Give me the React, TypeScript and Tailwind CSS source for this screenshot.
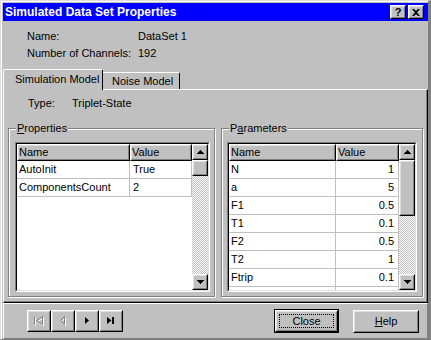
import React from "react";

function Raised({
  className = "",
  inner = "",
  children,
}: {
  className?: string;
  inner?: string;
  children?: React.ReactNode;
}) {
  return (
    <div
      className={`border border-t-white border-l-white border-r-black border-b-black bg-[#c0c0c0] ${className}`}
    >
      <div
        className={`w-full h-full border border-t-[#dfdfdf] border-l-[#dfdfdf] border-r-[#808080] border-b-[#808080] ${inner}`}
      >
        {children}
      </div>
    </div>
  );
}

function UpArrow() {
  return (
    <svg width="7" height="4" viewBox="0 0 7 4">
      <path d="M3 0h1v1h1v1h1v1h1v1H0V3h1V2h1V1h1z" fill="#000" />
    </svg>
  );
}
function DownArrow() {
  return (
    <svg width="7" height="4" viewBox="0 0 7 4">
      <path d="M0 0h7v1H6v1H5v1H4v1H3V3H2V2H1V1H0z" fill="#000" />
    </svg>
  );
}

function ListView({
  width,
  col1,
  col2,
  rows,
  rightAlign,
  thumb,
  extraRow,
}: {
  width: string;
  col1: string;
  col2: string;
  rows: [string, string][];
  rightAlign?: boolean;
  thumb: string;
  extraRow?: boolean;
}) {
  return (
    <div
      className={`${width} h-[150px] border border-t-[#808080] border-l-[#808080] border-r-white border-b-white`}
    >
      <div className="w-full h-full border border-t-black border-l-black border-r-[#dfdfdf] border-b-[#dfdfdf] bg-white flex">
        <div className="flex-1 flex flex-col overflow-hidden">
          <div className="flex h-[17px] shrink-0">
            <Raised className={`${col1} h-[17px]`} inner="leading-[13px]">
              Name
            </Raised>
            <Raised className={`${col2} h-[17px]`} inner="leading-[13px]">
              Value
            </Raised>
          </div>
          {rows.map(([n, v]) => (
            <div key={n} className="flex h-[18px] shrink-0 border-b border-[#c0c0c0]">
              <div className={`${col1} pl-[2px] border-r border-[#c0c0c0] leading-[17px]`}>{n}</div>
              <div
                className={`${col2} leading-[17px] border-r border-[#c0c0c0] ${
                  rightAlign ? "text-right pr-[4px]" : "pl-[3px]"
                }`}
              >
                {v}
              </div>
            </div>
          ))}
          {extraRow && (
            <div className="flex h-[18px] shrink-0">
              <div className={`${col1} border-r border-[#c0c0c0]`}></div>
              <div className={`${col2} border-r border-[#c0c0c0]`}></div>
            </div>
          )}
        </div>
        <div className="w-[16px] flex flex-col shrink-0">
          <Raised className="w-[16px] h-[16px]" inner="flex items-center justify-center">
            <UpArrow />
          </Raised>
          <Raised className={`w-[16px] ${thumb}`} />
          <div className="flex-1 bg-[repeating-conic-gradient(#c0c0c0_0%_25%,#ffffff_0%_50%)] bg-[length:2px_2px]" />
          <Raised className="w-[16px] h-[16px]" inner="flex items-center justify-center">
            <DownArrow />
          </Raised>
        </div>
      </div>
    </div>
  );
}

function GroupBox({
  className,
  label,
  children,
}: {
  className: string;
  label: React.ReactNode;
  children: React.ReactNode;
}) {
  return (
    <div
      className={`relative border border-[#808080] shadow-[inset_1px_1px_0_#ffffff,1px_1px_0_#ffffff] ${className}`}
    >
      <div className="absolute left-[7px] -top-[8px] px-[1px] bg-[#c0c0c0] leading-[14px]">{label}</div>
      {children}
    </div>
  );
}

function NavIcon({ kind }: { kind: number }) {
  if (kind === 0) {
    return (
      <svg width="12" height="10" viewBox="0 0 12 10">
        <g fill="none" stroke="#ffffff" strokeWidth="1" transform="translate(1,1)">
          <path d="M1.5 0.5v8M9.5 0.5v8L3.5 4.5z" />
        </g>
        <g fill="none" stroke="#808080" strokeWidth="1">
          <path d="M1.5 0.5v8M9.5 0.5v8L3.5 4.5z" />
        </g>
      </svg>
    );
  }
  if (kind === 1) {
    return (
      <svg width="12" height="10" viewBox="0 0 12 10">
        <g fill="none" stroke="#ffffff" strokeWidth="1" transform="translate(1,1)">
          <path d="M7.5 0.5v8L3.5 4.5z" />
        </g>
        <g fill="none" stroke="#808080" strokeWidth="1">
          <path d="M7.5 0.5v8L3.5 4.5z" />
        </g>
      </svg>
    );
  }
  if (kind === 2) {
    return (
      <svg width="12" height="10" viewBox="0 0 12 10">
        <path d="M4 1v7l4-3.5z" fill="#000" />
      </svg>
    );
  }
  return (
    <svg width="12" height="10" viewBox="0 0 12 10">
      <path d="M2 1v7l4.5-3.5z" fill="#000" />
      <rect x="7" y="1" width="2" height="7" fill="#000" />
    </svg>
  );
}

export default function App() {
  return (
    <div className="w-[431px] h-[340px] bg-[#c0c0c0] text-black text-[11px] font-['Liberation_Sans',Arial,sans-serif] border-t border-l border-t-[#dfdfdf] border-l-[#dfdfdf] border-r-[3px] border-r-[#808080] border-b border-b-[#808080]">
      <div className="w-full h-full border-t border-l border-white pt-px pl-px flex flex-col">
        {/* Title bar */}
        <div className="h-[18px] shrink-0 bg-[#0000ff] flex items-center pl-[2px] pr-[4px]">
          <span className="text-white font-bold text-[12px] leading-none">Simulated Data Set Properties</span>
          <div className="ml-auto flex gap-[2px]">
            <Raised className="w-[16px] h-[14px]" inner="flex items-center justify-center">
              <span className="font-bold text-[11px] leading-none">?</span>
            </Raised>
            <Raised className="w-[16px] h-[14px]" inner="flex items-center justify-center">
              <svg width="8" height="7" viewBox="0 0 8 7">
                <path d="M0 0h2l2 2 2-2h2L5 3.5 8 7H6L4 5 2 7H0l3-3.5z" fill="#000" />
              </svg>
            </Raised>
          </div>
        </div>

        {/* Info */}
        <div className="pt-[7px] pl-[24px] grid grid-cols-[111px_1fr] leading-[17px] shrink-0">
          <div>Name:</div>
          <div>DataSet 1</div>
          <div>Number of Channels:</div>
          <div>192</div>
        </div>

        {/* Tabs */}
        <div className="mt-[7px] h-[20px] flex items-end relative z-10 shrink-0">
          <div className="w-[100px] h-[21px] -mb-px bg-[#c0c0c0] border-t border-l border-r border-t-white border-l-white border-r-black rounded-tl-[2px] rounded-tr-[2px] pl-[11px] leading-[18px]">
            Simulation Model
          </div>
          <div className="w-[77px] h-[17px] border-t border-r border-t-white border-r-black rounded-tr-[2px] pl-[9px] leading-[16px]">
            Noise Model
          </div>
        </div>

        {/* Tab panel */}
        <div className="h-[214px] shrink-0 border border-t-white border-l-white border-r-black border-b-black">
          <div className="w-full h-full border-r border-b border-[#808080] flex flex-col">
            <div className="mt-[5px] pl-[24px] grid grid-cols-[44px_1fr] leading-[17px]">
              <div>Type:</div>
              <div>Triplet-State</div>
            </div>
            <div className="mt-[16px] pl-[4px] flex gap-[6px]">
              <GroupBox
                className="w-[207px] h-[169px] pt-[13px] pl-[6px]"
                label={
                  <span>
                    <span className="underline">P</span>roperties
                  </span>
                }
              >
                <ListView
                  width="w-[195px]"
                  col1="w-[113px]"
                  col2="w-[62px]"
                  rows={[
                    ["AutoInit", "True"],
                    ["ComponentsCount", "2"],
                  ]}
                  thumb="h-[16px]"
                />
              </GroupBox>
              <GroupBox
                className="w-[202px] h-[169px] pt-[13px] pl-[5px]"
                label={
                  <span>
                    P<span className="underline">a</span>rameters
                  </span>
                }
              >
                <ListView
                  width="w-[190px]"
                  col1="w-[107px]"
                  col2="w-[63px]"
                  rows={[
                    ["N", "1"],
                    ["a", "5"],
                    ["F1", "0.5"],
                    ["T1", "0.1"],
                    ["F2", "0.5"],
                    ["T2", "1"],
                    ["Ftrip", "0.1"],
                  ]}
                  rightAlign
                  thumb="h-[56px]"
                  extraRow
                />
              </GroupBox>
            </div>
          </div>
        </div>

        {/* Bottom */}
        <div className="flex-1 border border-t-white border-l-white border-r-[#808080] border-b-[#808080] flex items-center pl-[23px] pr-[8px]">
          <div className="flex">
            {[0, 1, 2, 3].map((k) => (
              <Raised key={k} className="w-[24px] h-[22px]" inner="flex items-center justify-center">
                <NavIcon kind={k} />
              </Raised>
            ))}
          </div>
          <div className="ml-auto border border-black w-[65px] h-[24px]">
            <Raised className="w-full h-full" inner="p-[2px]">
              <div className="w-full h-full border border-dotted border-black flex items-center justify-center">
                Close
              </div>
            </Raised>
          </div>
          <Raised className="ml-[14px] w-[66px] h-[23px]" inner="flex items-center justify-center">
            <span>
              <span className="underline">H</span>elp
            </span>
          </Raised>
        </div>
      </div>
    </div>
  );
}
